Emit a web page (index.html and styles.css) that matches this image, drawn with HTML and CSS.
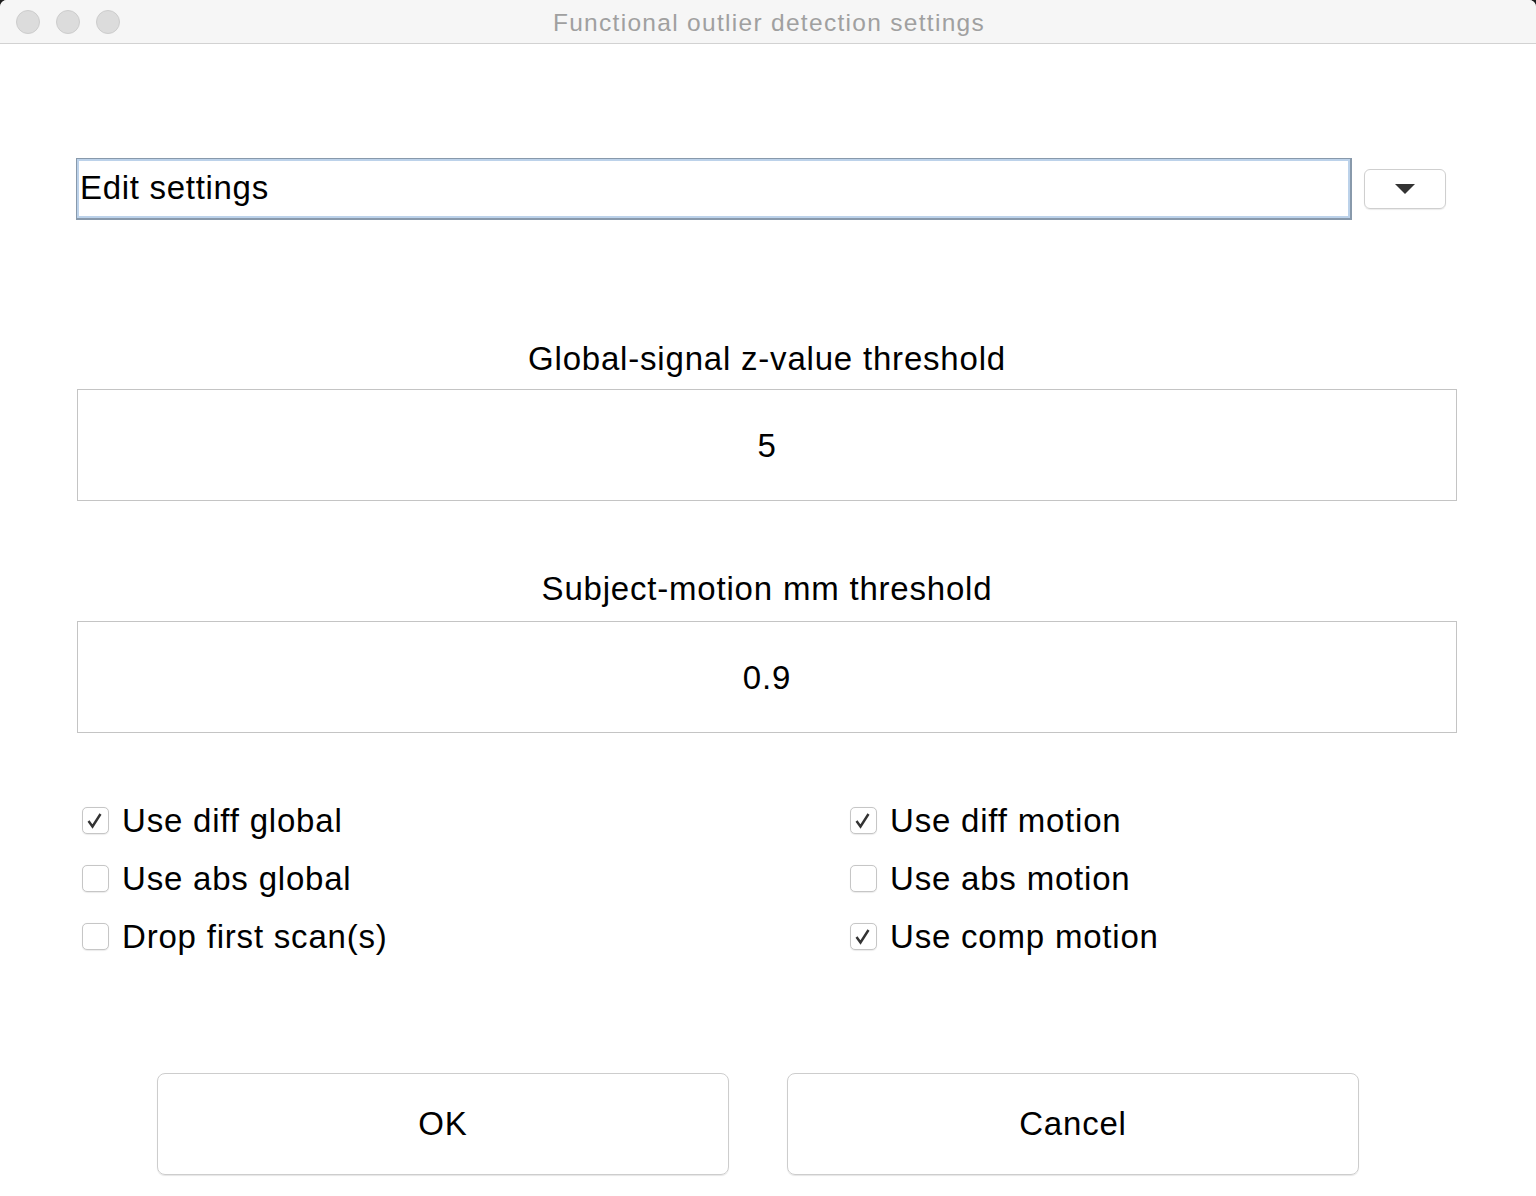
FILE: index.html
```html
<!DOCTYPE html>
<html>
<head>
<meta charset="utf-8">
<title>Functional outlier detection settings</title>
<link rel="stylesheet" href="styles.css">
</head>
<body>
<div class="window">
  <div class="titlebar">
    <div class="lights">
      <span class="light"></span>
      <span class="light"></span>
      <span class="light"></span>
    </div>
    <div class="title">Functional outlier detection settings</div>
  </div>
  <div class="content">
    <div class="edit-row">
      <div class="combo-field">Edit settings</div>
      <div class="combo-btn">
        <svg width="20" height="10" viewBox="0 0 20 10"><path d="M0 0 H20 L10 10 Z" fill="#333"/></svg>
      </div>
    </div>

    <div class="label first">Global-signal z-value threshold</div>
    <div class="value-field">5</div>

    <div class="label second">Subject-motion mm threshold</div>
    <div class="value-field">0.9</div>

    <div class="checks">
      <div class="check"><span class="box on"><svg width="27" height="27" viewBox="0 0 27 27"><path d="M6.5 14 L10.5 19.5 L18.5 7" fill="none" stroke="#333" stroke-width="2.4"/></svg></span>Use diff global</div>
      <div class="check"><span class="box on"><svg width="27" height="27" viewBox="0 0 27 27"><path d="M6.5 14 L10.5 19.5 L18.5 7" fill="none" stroke="#333" stroke-width="2.4"/></svg></span>Use diff motion</div>
      <div class="check"><span class="box"></span>Use abs global</div>
      <div class="check"><span class="box"></span>Use abs motion</div>
      <div class="check"><span class="box"></span>Drop first scan(s)</div>
      <div class="check"><span class="box on"><svg width="27" height="27" viewBox="0 0 27 27"><path d="M6.5 14 L10.5 19.5 L18.5 7" fill="none" stroke="#333" stroke-width="2.4"/></svg></span>Use comp motion</div>
    </div>

    <div class="buttons">
      <div class="btn">OK</div>
      <div class="btn">Cancel</div>
    </div>
  </div>
</div>
</body>
</html>
```

FILE: styles.css
```css
html {
  background: #1e1e1e;
}
body {
  margin: 0;
  width: 1536px;
  height: 1196px;
  overflow: hidden;
  font-family: "Liberation Sans", Arial, sans-serif;
  color: #000;
}
.window {
  width: 1536px;
  height: 1196px;
  background: #fff;
  border-radius: 7px 7px 0 0;
  overflow: hidden;
}
.titlebar {
  height: 43px;
  background: #f6f6f6;
  border-bottom: 1px solid #d2d2d2;
  display: flex;
  align-items: center;
  position: relative;
}
.lights {
  display: flex;
  gap: 16px;
  padding-left: 16px;
  padding-top: 1px;
}
.light {
  width: 22px;
  height: 22px;
  border-radius: 50%;
  background: #dcdcdc;
  border: 1px solid #cdcdcd;
}
.title {
  position: absolute;
  left: 0;
  right: 0;
  top: 0;
  line-height: 46px;
  text-align: center;
  font-size: 24.5px;
  letter-spacing: 1.3px;
  color: #a0a0a0;
  padding-left: 2px;
}
.content {
  padding-left: 76px;
  font-size: 33px;
  letter-spacing: 0.8px;
}
.edit-row {
  margin-top: 114px;
  display: flex;
  align-items: center;
  gap: 12px;
}
.combo-field {
  width: 1270px;
  height: 59px;
  border: 1px solid #8899ab;
  border-right-width: 2px;
  border-bottom-width: 2px;
  box-shadow: inset 0 0 0 2px #bcd2ea;
  line-height: 57px;
  padding-left: 3px;
  letter-spacing: 0.7px;
  box-sizing: content-box;
}
.combo-btn {
  width: 80px;
  height: 38px;
  border: 1px solid #cfcfcf;
  border-radius: 6px;
  box-shadow: 0 1px 1px rgba(0, 0, 0, 0.08);
  display: flex;
  align-items: center;
  justify-content: center;
}
.label {
  width: 1380px;
  margin-left: 1px;
  text-align: center;
  line-height: 40px;
  margin-bottom: 10px;
}
.label.first {
  margin-top: 119px;
}
.label.second {
  margin-top: 68px;
  margin-bottom: 12px;
}
.value-field {
  width: 1378px;
  height: 110px;
  margin-left: 1px;
  border: 1px solid #c4c4c4;
  text-align: center;
  line-height: 112px;
}
.checks {
  margin-top: 58px;
  padding-left: 6px;
  display: grid;
  grid-template-columns: 768px 600px;
  grid-auto-rows: 58px;
}
.check {
  display: flex;
  align-items: center;
  gap: 13px;
  padding-top: 2px;
}
.box {
  width: 25px;
  height: 25px;
  border: 1px solid #c6c6c6;
  border-radius: 5px;
  background: #fff;
  box-shadow: 0 0.5px 1px rgba(0, 0, 0, 0.08);
  position: relative;
  flex: none;
  margin-top: -2px;
}
.box svg {
  position: absolute;
  left: -1px;
  top: -1px;
}
.buttons {
  margin-top: 108px;
  padding-left: 81px;
  display: flex;
  gap: 58px;
}
.btn {
  width: 570px;
  height: 100px;
  border: 1px solid #cdcdcd;
  border-radius: 8px;
  box-shadow: 0 1px 1px rgba(0, 0, 0, 0.1);
  text-align: center;
  line-height: 100px;
}
```
